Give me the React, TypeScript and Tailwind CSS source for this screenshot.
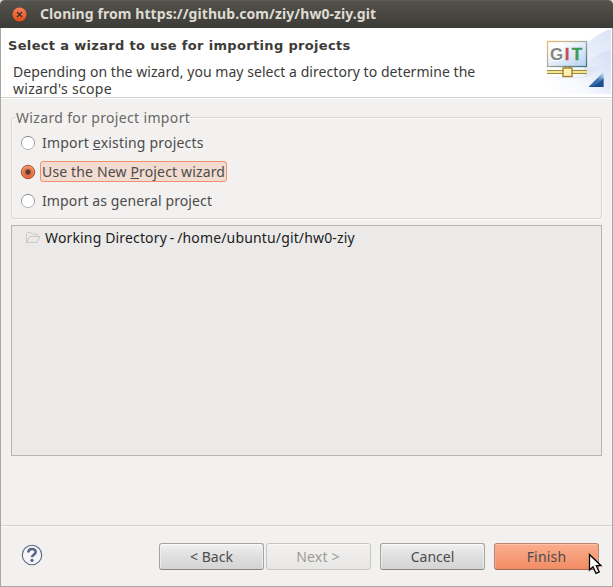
import type { ReactNode } from "react";

function Radio({ checked = false }: { checked?: boolean }) {
  return (
    <svg className="h-4 w-4 shrink-0" viewBox="0 0 16 16">
      <defs>
        <linearGradient id="radioOn" x1="0" y1="0" x2="0" y2="1">
          <stop offset="0" stopColor="#fba37e" />
          <stop offset="1" stopColor="#e9683a" />
        </linearGradient>
        <linearGradient id="radioRim" x1="0" y1="0" x2="0" y2="1">
          <stop offset="0" stopColor="#8e8c89" />
          <stop offset="1" stopColor="#b9b7b3" />
        </linearGradient>
      </defs>
      {checked ? (
        <>
          <circle cx="8" cy="8" r="6.7" fill="url(#radioOn)" stroke="#a9502f" />
          <circle cx="8" cy="8" r="4.2" fill="none" stroke="#c85f3a" strokeWidth="0.7" />
          <circle cx="8" cy="8" r="2.7" fill="#5f3a2c" />
        </>
      ) : (
        <circle cx="8" cy="8" r="6.6" fill="#fff" stroke="url(#radioRim)" />
      )}
    </svg>
  );
}

function Option({ checked, className, children }: { checked?: boolean; className: string; children: ReactNode }) {
  return (
    <div className="flex h-[29px] items-center">
      <Radio checked={checked} />
      <div
        className={`ml-1 flex h-[21px] items-center whitespace-pre rounded-[3px] border px-px ${
          checked ? "border-[#f0916b] bg-[#f2dbd0]" : "border-transparent"
        }`}
      >
        <span className={className}>{children}</span>
      </div>
    </div>
  );
}

function Button({ kind = "normal", className, children }: { kind?: "normal" | "disabled" | "primary"; className: string; children: ReactNode }) {
  const look = {
    normal: "border-[#a5a3a1] border-b-[#888684] bg-linear-to-b from-[#f1f1f1] via-[#dfdfdf] to-[#d4d4d4] text-[#4c4c4c] shadow-[inset_0_1px_0_#fafafa,inset_1px_0_0_#eeeeee,inset_-1px_0_0_#eeeeee]",
    disabled: "border-[#c8c6c4] bg-linear-to-b from-[#f3f2f1] to-[#e7e6e5] text-[#9b9a98] shadow-[inset_0_1px_0_#fafafa]",
    primary: "border-[#b98573] border-b-[#a06b58] bg-linear-to-b from-[#fcad8d] via-[#f69d79] to-[#f18c64] text-[#4c4c4c] shadow-[inset_0_1px_0_#ffc2a8,inset_1px_0_0_#f8a887,inset_-1px_0_0_#f8a887]",
  }[kind];
  return (
    <button className={`flex h-[27px] w-[105px] items-center justify-center rounded-[3px] border ${look}`}>
      <span className={className}>{children}</span>
    </button>
  );
}

function GitBanner() {
  return (
    <svg className="h-[69px] w-[73px] shrink-0" viewBox="0 0 73 69">
      <defs>
        <linearGradient id="sweep" x1="0" y1="1" x2="1" y2="0">
          <stop offset="0.1" stopColor="#ffffff" />
          <stop offset="0.5" stopColor="#f0f4fc" />
          <stop offset="1" stopColor="#dbe3f7" />
        </linearGradient>
        <linearGradient id="sweepInner" x1="0" y1="0.8" x2="1" y2="0">
          <stop offset="0.2" stopColor="#d4def6" stopOpacity="0" />
          <stop offset="1" stopColor="#d4def6" stopOpacity="0.8" />
        </linearGradient>
        <linearGradient id="screen" x1="0" y1="0" x2="1" y2="1">
          <stop offset="0.2" stopColor="#fff" />
          <stop offset="1" stopColor="#b8d0ef" />
        </linearGradient>
        <linearGradient id="frame" x1="0" y1="0" x2="1" y2="1">
          <stop offset="0" stopColor="#f1b66e" />
          <stop offset="0.4" stopColor="#b5b4a5" />
          <stop offset="1" stopColor="#3d727c" />
        </linearGradient>
        <linearGradient id="corner" x1="0.3" y1="1" x2="0.8" y2="0">
          <stop offset="0" stopColor="#2c62a4" />
          <stop offset="0.5" stopColor="#3f75b2" />
          <stop offset="1" stopColor="#c4d8ee" />
        </linearGradient>
        <linearGradient id="shade" x1="0" y1="0" x2="1" y2="0">
          <stop offset="0" stopColor="#bba7b8" stopOpacity="0.5" />
          <stop offset="1" stopColor="#bba7b8" stopOpacity="0" />
        </linearGradient>
      </defs>
      <path d="M72 1 C54 6 38 24 22 44 L0 66 H72Z" fill="url(#sweep)" />
      <path d="M72 22 C56 25 42 36 31 66 H72Z" fill="url(#sweepInner)" />
      <path d="M5 50 L49 49 L65 39 H46 L45 50Z" fill="url(#shade)" />
      <rect x="8.5" y="13.5" width="39" height="25" fill="url(#screen)" stroke="url(#frame)" strokeWidth="1.300" />
      <g fontFamily="Liberation Sans, sans-serif" fontSize="17" fontWeight="700" textAnchor="middle">
        <text x="17.500" y="32" fill="#858585" stroke="#fff" strokeWidth="2" paintOrder="stroke">G</text>
        <text x="28" y="32" fill="#c34e57" stroke="#c34e57" strokeWidth="0.3">I</text>
        <text x="38" y="32" fill="#3c9a52" stroke="#3c9a52" strokeWidth="0.4">T</text>
      </g>
      <path d="M26.500 38v3M30.500 38v3" stroke="#6d7b27" />
      <path d="M8 42.500H48M8 45.500H48" stroke="#a28c31" />
      <path d="M8 44H48" stroke="#efe79d" strokeWidth="2" />
      <rect x="24" y="40" width="9" height="8.500" fill="#fff0b8" stroke="#9d7d17" strokeWidth="1.300" />
      <path d="M49.500 59 L64.500 44 V59Z" fill="url(#corner)" />
      <path d="M51 59 Q59 57 64.500 50 V59Z" fill="#17458a" opacity="0.8" />
    </svg>
  );
}

export default function App() {
  return (
    <div className="h-[587px] w-[613px] bg-[#d9d7d5] font-['Noto_Sans','Open_Sans',sans-serif] text-[14px] leading-[17px] text-[#4c4c4c]">
      <div className="relative flex h-full flex-col overflow-hidden rounded-t-[5px] bg-[#aaa7a1]">
        <header className="flex h-7 shrink-0 items-center border-t border-[#5d5c56] bg-linear-to-b from-[#53524c] to-[#3c3b37] pl-3">
          <svg className="h-4 w-4" viewBox="0 0 16 16">
            <defs>
              <linearGradient id="close" x1="0" y1="0" x2="0" y2="1">
                <stop offset="0" stopColor="#f5825b" />
                <stop offset="1" stopColor="#df4b16" />
              </linearGradient>
            </defs>
            <circle cx="7.500" cy="7.500" r="7.400" fill="url(#close)" stroke="#353430" strokeWidth="0.6" />
            <path d="M5 5l5 5M10 5l-5 5" stroke="#3c2b23" strokeWidth="1.200" />
          </svg>
          <h1 className="mb-0.5 ml-3 whitespace-pre font-bold tracking-[0.08px] text-[#dfdbd2]">Cloning from https://github.com/ziy/hw0-ziy.git</h1>
        </header>
        <main className="mx-px mb-px flex min-h-0 flex-1 flex-col bg-[#f2f1f0]">
          <section className="flex h-[69px] shrink-0 justify-between bg-white text-[#3c3b37]">
            <div className="pl-[7px] pt-[9px]">
              <h2 className="whitespace-pre font-['DejaVu_Sans',sans-serif] text-[13px] font-bold tracking-[0.33px]">Select a wizard to use for importing projects</h2>
              <div className="ml-[5px] mt-[9px] whitespace-pre">
                <p className="tracking-[0.05px]">Depending on the wizard, you may select a directory to determine the</p>
                <p className="tracking-[0.3px]">wizard's scope</p>
              </div>
            </div>
            <GitBanner />
          </section>
          <div className="h-0.5 shrink-0 border-t border-[#d4d2d0] bg-white" />
          <div className="flex flex-1 flex-col px-[10px] pt-[10px]">
            <fieldset className="h-[110px] rounded-[3px] border border-[#d6d4d2] pl-2 shadow-[inset_1px_1px_0_#fafafa,1px_1px_0_#fafafa]">
              <legend className="-ml-1 h-[17px] whitespace-pre tracking-[0.34px] text-[#686765]">Wizard for project import</legend>
              <div className="pt-0.5">
                <Option className="tracking-[0.2px]">Import <u>e</u>xisting projects</Option>
                <Option checked className="tracking-[0.15px]">Use the New <u>P</u>roject wizard</Option>
                <Option className="tracking-[0.12px]">Import as general project</Option>
              </div>
            </fieldset>
            <div className="mt-[6px] flex h-[231px] items-start border border-[#b6b4b1] bg-[#ebeae9] pl-[13px] pt-[3px] text-[#1c1c1c]">
              <svg className="mt-px h-4 w-4 shrink-0" viewBox="0 0 16 16" fill="none" stroke="#cbc9c7">
                <path d="M1.500 12.500v-9l1-1h3l1 1.500h5.500v2.500M1.500 12.500l3-6h10.500l-3 6z" />
              </svg>
              <span className="ml-1 whitespace-pre tracking-[0.15px]">Working Directory<span className="-mx-px"> - </span>/home/ubuntu/git/hw0-ziy</span>
            </div>
          </div>
          <footer className="flex h-[61px] shrink-0 items-center border-t border-[#d4d2d0] pl-5 pr-[13px] shadow-[inset_0_1px_0_#fafafa]">
            <svg className="mb-0.5 h-[22px] w-[22px]" viewBox="0 0 22 22">
              <circle cx="11" cy="11" r="9.700" fill="#f5f5f7" stroke="#576783" strokeWidth="1.100" />
              <path d="M7.300 8.500C7.500 4 14.700 4 14.700 8c0 2.700-3.700 2.700-3.700 5.300" fill="none" stroke="#566784" strokeWidth="2.600" />
              <circle cx="11" cy="16.300" r="1.600" fill="#566784" />
            </svg>
            <div className="ml-auto flex">
              <Button className="">&lt; Back</Button>
              <div className="ml-0.5"><Button kind="disabled" className="mr-px tracking-[0.2px]">Next &gt;</Button></div>
              <div className="ml-[9px]"><Button className="">Cancel</Button></div>
              <div className="ml-[9px]"><Button kind="primary" className="tracking-[0.2px]">Finish</Button></div>
            </div>
          </footer>
        </main>
        <svg className="absolute left-[588px] top-[553px] h-[22px] w-[15px]" viewBox="0 0 15 22">
          <path d="M1.500 1.500V17L5 13.800L8 20.300L11.200 18.900L8.300 12.700H13Z" fill="#fff" stroke="#000" strokeWidth="1.300" />
        </svg>
      </div>
    </div>
  );
}
